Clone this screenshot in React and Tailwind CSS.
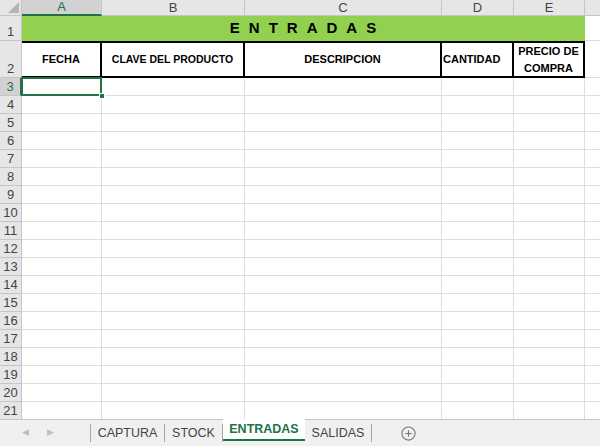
import React from "react";

const cols = ["A", "B", "C", "D", "E"];

function RowHead({ n, selected }) {
  return (
    <div
      className={`flex items-end justify-center pb-0 text-[13px] leading-[17px] border-b border-r ${
        selected
          ? "bg-[#d2d2d2] text-[#217346] border-r-[#217346] border-r-2 border-b-[#c6c6c6]"
          : "bg-[#e6e6e6] text-[#444] border-[#c6c6c6]"
      }`}
    >
      {n}
    </div>
  );
}

function App() {
  const bodyRows = [];
  for (let r = 3; r <= 21; r++) bodyRows.push(r);

  return (
    <div
      className="w-[600px] h-[446px] bg-white overflow-hidden flex flex-col"
      style={{ fontFamily: '"Liberation Sans", Arial, sans-serif' }}
    >
      <div className="grid grid-cols-[22px_80px_143px_197px_72px_71px_1fr] grid-rows-[16px_25px_37px_repeat(19,18px)] flex-1 min-h-0 overflow-hidden">
        {/* column headers */}
        <div className="bg-[#e6e6e6] border-r border-b border-[#c6c6c6] relative overflow-hidden">
          <div className="absolute right-[2px] bottom-[2px] w-0 h-0 border-l-[11px] border-l-transparent border-b-[11px] border-b-[#b4b4b4]" />
        </div>
        {cols.map((c) => (
          <div
            key={c}
            className={`flex items-center justify-center text-[13px] border-r border-[#c6c6c6] ${
              c === "A"
                ? "bg-[#d2d2d2] text-[#217346] border-b-2 border-b-[#217346]"
                : "bg-[#e6e6e6] text-[#444] border-b"
            }`}
          >
            {c}
          </div>
        ))}
        <div className="bg-[#e6e6e6] border-b border-[#c6c6c6]" />

        {/* row 1 */}
        <RowHead n={1} />
        <div className="col-span-5 bg-[#92d050] flex items-center justify-center text-[15px] font-bold tracking-[0.6em] pl-[8px] text-black">
          ENTRADAS
        </div>
        <div className="border-b border-[#dedede]" />

        {/* row 2 */}
        <RowHead n={2} />
        <div className="border-y-2 border-r-2 border-black flex items-center justify-center text-[11px] font-bold">
          FECHA
        </div>
        <div className="border-y-2 border-r-2 border-black flex items-center justify-center text-[10.5px] font-bold">
          CLAVE DEL PRODUCTO
        </div>
        <div className="border-y-2 border-r-2 border-black flex items-center justify-center text-[11px] font-bold">
          DESCRIPCION
        </div>
        <div className="border-y-2 border-r-2 border-black flex items-center pl-[1px] text-[11px] font-bold">
          CANTIDAD
        </div>
        <div className="border-y-2 border-r-2 border-black flex items-center justify-center text-center text-[11px] font-bold leading-[17px]">
          PRECIO DE
          <br />
          COMPRA
        </div>
        <div className="border-b border-[#dedede]" />

        {/* body */}
        {bodyRows.map((r) => (
          <React.Fragment key={r}>
            <RowHead n={r} selected={r === 3} />
            {cols.map((c) => (
              <div
                key={c}
                className={`border-r border-b border-[#dedede] ${
                  r === 3 && c === "A" ? "relative" : ""
                }`}
              >
                {r === 3 && c === "A" && (
                  <>
                    <div className="absolute -inset-[1px] border-2 border-[#217346]" />
                    <div className="absolute right-[-4px] bottom-[-4px] w-[6px] h-[6px] bg-[#217346] border border-white" />
                  </>
                )}
              </div>
            ))}
            <div className="border-b border-[#dedede]" />
          </React.Fragment>
        ))}
      </div>

      {/* sheet tabs */}
      <div className="h-[27px] shrink-0 bg-[#f0f0f0] border-t border-[#c6c6c6] flex items-stretch text-[12.5px] text-[#444]">
        <div className="w-[90px] flex items-center pl-[22px] gap-[18px] text-[#c0c0c0] text-[9px]">
          <span>◀</span>
          <span>▶</span>
        </div>
        <div className="w-px my-[4px] bg-[#a6a6a6]" />
        <div className="w-[73px] flex items-center justify-center">CAPTURA</div>
        <div className="w-px my-[4px] bg-[#a6a6a6]" />
        <div className="w-[57px] flex items-center justify-center">STOCK</div>
        <div className="w-px my-[4px] bg-[#a6a6a6]" />
        <div className="w-[82px] -mt-px bg-white flex items-center justify-center font-bold text-[#217346] border-b-2 border-[#217346] mb-[5px]">
          ENTRADAS
        </div>
        <div className="w-[66px] flex items-center justify-center">SALIDAS</div>
        <div className="w-px my-[4px] bg-[#a6a6a6]" />
        <div className="w-[73px] flex items-center justify-center">
          <svg width="15" height="15" viewBox="0 0 16 16" fill="none" stroke="#777" strokeWidth="1.2">
            <circle cx="8" cy="8" r="7" />
            <path d="M8 4.5v7M4.5 8h7" />
          </svg>
        </div>
      </div>
    </div>
  );
}

export default App;
